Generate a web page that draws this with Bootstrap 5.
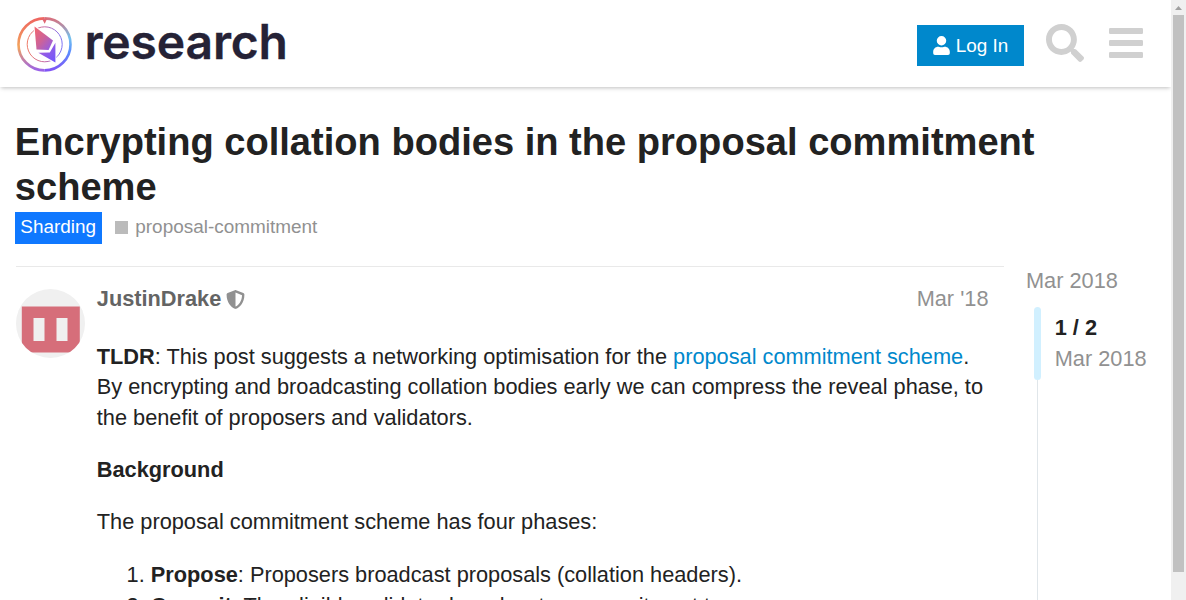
<!DOCTYPE html>
<html lang="en">
<head>
<meta charset="utf-8">
<title>Encrypting collation bodies in the proposal commitment scheme</title>
<link href="https://cdn.jsdelivr.net/npm/bootstrap@5.3.0/dist/css/bootstrap.min.css" rel="stylesheet">
<style>
  html, body { height: 100%; overflow: hidden; }
  body { font-family: "Liberation Sans", Arial, sans-serif; font-size: 21.75px; line-height: 30.4px; color: #222; }
  .page-area { width: 1171px; height: 600px; overflow: hidden; }
  .site-header { height: 87px; padding: 0 28px 0 16px; box-shadow: 0 2px 4px -1px rgba(0,0,0,.25); }
  .brand-logo { margin-top: 1px; }
  .brand-name { font-family: Inter, sans-serif; font-weight: 600; font-size: 48px; line-height: 56px; color: #252236; letter-spacing: -.15px; -webkit-text-stroke: .3px #252236; margin-left: 11.500px; margin-top: -3px; }
  .login-btn { width: 107px; height: 41px; background: #0088cc; color: #fff; font-size: 18.9px; line-height: 22px; border-radius: 0; margin-top: 4px; gap: 6px; }
  .search-icon { margin-left: 22px; margin-top: -1px; }
  .menu-icon { margin-left: 25px; margin-top: -1px; }
  .topic-title { font-size: 38.08px; line-height: 45px; font-weight: 700; margin: 33px 0 2px; }
  .topic-head { padding-left: 14.8px; padding-right: 100px; }
  .cat-row { font-size: 18.93px; line-height: 30px; height: 32px; color: #919191; }
  .cat-main { background: #0f78ff; color: #fff; padding-left: 5.500px; width: 87px; height: 32px; }
  .cat-square { width: 13px; height: 13px; background: #bbb; margin: 0 7.500px 0 13px; }
  .cat-tag { height: 30px; }
  .post-col { width: 988px; margin-left: 16px; margin-top: 22px; border-top: 1px solid #e9e9e9; padding-top: 22px; }
  .post-body { width: 908px; margin-left: 11.800px; }
  .post-meta { line-height: 20px; margin-bottom: 33px; padding-right: 15.500px; }
  .user-name { color: #646464; }
  .shield { margin-left: 5px; }
  .muted { color: #919191; }
  .post-body p { margin-bottom: 21.9px; }
  .post-body a { color: #0088cc; text-decoration: none; }
  .post-body ol { padding: .4px 0 0 54px; margin: 0; white-space: nowrap; }
  .time-col { margin: 22px 0 0 22px; width: 130px; }
  .rail { width: 7px; margin-left: 8px; }
  .rail-handle { width: 7px; height: 73px; border-radius: 4px; background: #d1f0ff; }
  .rail-line { width: 1px; height: 300px; background: #e0e6ea; margin: 0 auto; }
  .time-body { margin-top: 11px; }
  .time-pos { margin: 6px 0 0 13.700px; }
  .scroll-track { width: 15px; height: 600px; background: #f0f0f0; }
  .scroll-thumb { width: 11px; height: 557px; background: #c1c1c1; }
</style>
<script src="https://cdn.jsdelivr.net/npm/bootstrap@5.3.0/dist/js/bootstrap.bundle.min.js"></script>
</head>
<body>
<div class="d-flex">
  <div class="page-area">
    <header class="site-header d-flex align-items-center justify-content-between bg-white">
      <div class="d-flex align-items-center">
        <svg class="brand-logo" width="57" height="57" viewBox="0 0 57 57">
          <defs>
            <linearGradient id="ringWarm" x1="0" y1="0" x2="0" y2="1"><stop offset="0" stop-color="#ee6660"/><stop offset=".55" stop-color="#f3a45c"/><stop offset="1" stop-color="#9a62e8"/></linearGradient>
            <linearGradient id="ringCool" x1="0" y1="0" x2="0" y2="1"><stop offset="0" stop-color="#d7707e"/><stop offset=".38" stop-color="#74c2ee"/><stop offset=".65" stop-color="#5a8cff"/><stop offset="1" stop-color="#8055f5"/></linearGradient>
            <linearGradient id="gem" x1="0" y1="0" x2="1" y2="1"><stop offset="0" stop-color="#f5666c"/><stop offset=".5" stop-color="#cc6299"/><stop offset="1" stop-color="#8a5cf0"/></linearGradient>
            <linearGradient id="shard" x1="0" y1="0" x2="1" y2="1"><stop offset="0" stop-color="#b263d0"/><stop offset="1" stop-color="#6f55ff"/></linearGradient>
            <linearGradient id="innerRing" x1="0" y1="0" x2="1" y2="0"><stop offset="0" stop-color="#ee7c68"/><stop offset=".5" stop-color="#c66aa5"/><stop offset="1" stop-color="#7b72f5"/></linearGradient>
          </defs>
          <g fill="none">
            <path d="M28.5 2.4a26 26 0 0 0 0 52" stroke="url(#ringWarm)" stroke-width="2.6"/>
            <path d="M28.5 2.4a26 26 0 0 1 0 52" stroke="url(#ringCool)" stroke-width="2.6"/>
            <circle cx="28.7" cy="28.3" r="17.5" stroke="url(#innerRing)" stroke-width="1"/>
          </g>
          <path d="M25.8 2.5h5.4l-2.5 5.2z" fill="#e16672"/>
          <g stroke="#fff" stroke-width="2" paint-order="stroke">
            <path d="M18.500 10.500 37 24.500 32.600 34 20.500 33.500z" fill="url(#gem)"/>
            <path d="M22.300 36.800 33.800 36.500 39.400 26.800V46.500z" fill="url(#shard)"/>
          </g>
        </svg>
        <span class="brand-name">research</span>
      </div>
      <div class="d-flex align-items-center">
        <button class="btn login-btn d-flex align-items-center justify-content-center p-0" type="button">
          <svg width="17" height="19" viewBox="0 0 448 512" fill="#fff"><path d="M224 256a128 128 0 1 0 0-256 128 128 0 0 0 0 256zm89.600 32h-16.700a174 174 0 0 1-145.800 0h-16.700C60.200 288 0 348.200 0 422.400V464a48 48 0 0 0 48 48h352a48 48 0 0 0 48-48v-41.600c0-74.200-60.200-134.400-134.400-134.400z"/></svg>
          <span>Log In</span>
        </button>
        <svg class="search-icon" width="38" height="38" viewBox="0 0 512 512" fill="#d0d0d0"><path d="M505 442.700 405.300 343c-4.500-4.500-10.600-7-17-7H372c27.600-35.300 44-79.700 44-128C416 93.100 322.900 0 208 0S0 93.100 0 208s93.100 208 208 208c48.300 0 92.700-16.400 128-44v16.300c0 6.400 2.500 12.500 7 17l99.700 99.700c9.400 9.400 24.600 9.400 33.900 0l28.300-28.300c9.400-9.400 9.400-24.600.1-34zM208 336c-70.700 0-128-57.200-128-128 0-70.700 57.200-128 128-128 70.700 0 128 57.200 128 128 0 70.700-57.200 128-128 128z"/></svg>
        <svg class="menu-icon" width="34" height="30" viewBox="0 0 34 30" fill="#d0d0d0"><rect width="34" height="6" rx="1.200"/><rect y="12" width="34" height="6" rx="1.200"/><rect y="24" width="34" height="6" rx="1.200"/></svg>
      </div>
    </header>
    <main>
      <div class="topic-head">
        <h1 class="topic-title">Encrypting collation bodies in the proposal commitment scheme</h1>
        <div class="cat-row d-flex">
          <span class="cat-main">Sharding</span>
          <div class="cat-tag d-flex align-items-center"><span class="cat-square"></span><span>proposal-commitment</span></div>
        </div>
      </div>
      <div class="d-flex align-items-start">
        <article class="post-col d-flex">
          <svg class="flex-shrink-0" width="69" height="69" viewBox="0 0 69 69">
            <clipPath id="avatarClip"><circle cx="34.500" cy="34.500" r="34.500"/></clipPath>
            <g clip-path="url(#avatarClip)"><rect width="69" height="69" fill="#f0f0f0"/><path d="M5.800 17.500h58v46h-58z" fill="#d66e7a"/><path d="M17.500 29h11v23h-11zM40.500 29h11v23h-11z" fill="#f0f0f0"/></g>
          </svg>
          <div class="post-body">
            <div class="post-meta d-flex justify-content-between">
              <div class="d-flex align-items-center"><b class="user-name">JustinDrake</b>
                <svg class="shield" width="19" height="19" viewBox="0 0 512 512" fill="#919191"><path d="M466.500 83.700l-192-80a48.200 48.200 0 0 0-36.900 0l-192 80C27.700 91.100 16 108.600 16 128c0 198.500 114.500 335.700 221.500 380.300 11.800 4.900 25.100 4.900 36.900 0C360.100 472.600 496 349.300 496 128c0-19.400-11.700-36.900-29.500-44.300zM256.100 446.300V65.700l176 73.300c-3.300 151.400-82.100 261.100-176 307.300z"/></svg>
              </div>
              <span class="muted">Mar '18</span>
            </div>
            <p><b>TLDR</b>: This post suggests a networking optimisation for the <a href="#">proposal commitment scheme</a>.<br>By encrypting and broadcasting collation bodies early we can compress the reveal phase, to<br>the benefit of proposers and validators.</p>
            <p><b>Background</b></p>
            <p>The proposal commitment scheme has four phases:</p>
            <ol><li><b>Propose</b>: Proposers broadcast proposals (collation headers).</li><li><b>Commit</b>: The eligible validator broadcasts a commitment to a proposer.</li></ol>
          </div>
        </article>
        <aside class="time-col">
          <div class="muted">Mar 2018</div>
          <div class="time-body d-flex">
            <div class="rail"><div class="rail-handle"></div><div class="rail-line"></div></div>
            <div class="time-pos"><b>1 / 2</b><br><span class="muted">Mar 2018</span></div>
          </div>
        </aside>
      </div>
    </main>
  </div>
  <div class="scroll-track d-flex flex-column align-items-center">
    <svg width="15" height="15" viewBox="0 0 15 15"><path d="M4 10 7.500 6 11 10z" fill="#a0a0a0"/></svg>
    <div class="scroll-thumb"></div>
  </div>
</div>
</body>
</html>
